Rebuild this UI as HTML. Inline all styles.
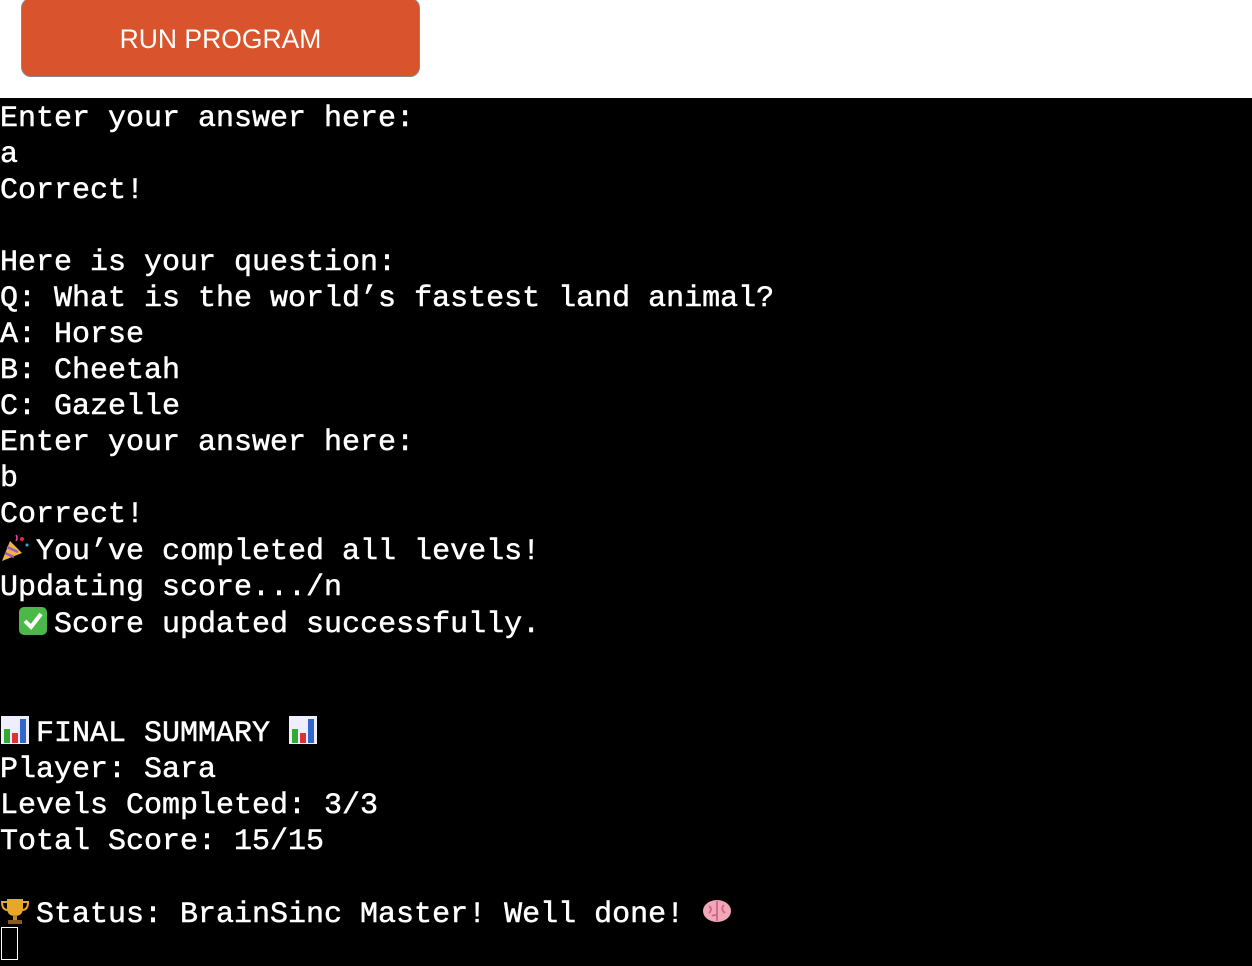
<!DOCTYPE html>
<html><head><meta charset="utf-8"><style>
html,body{margin:0;padding:0;background:#fff;width:1252px;height:966px;overflow:hidden}
.btn{position:absolute;left:21px;top:-2px;width:397px;height:77px;background:#d9542c;border:1px solid #888;border-radius:10px;color:#fff;font:26.5px "Liberation Sans",Arial,sans-serif;text-align:center;line-height:80px}
.term{position:absolute;left:0;top:98px;width:1252px;height:868px;background:#000}
pre{margin:0;padding-top:3px;color:#fff;font:30px/36px "Liberation Mono","Courier New",monospace;white-space:pre;-webkit-text-stroke:0.5px #fff}
.e{display:inline-block;width:36px;height:30px;vertical-align:-4px;line-height:0}
.e svg{width:30px;height:30px}
.cur{position:absolute;left:1px;top:829px;width:15px;height:31px;border:1px solid #fff}
</style></head><body>
<div class="btn">RUN PROGRAM</div>
<div class="term"><pre>Enter your answer here:
a
Correct!

Here is your question:
Q: What is the world’s fastest land animal?
A: Horse
B: Cheetah
C: Gazelle
Enter your answer here:
b
Correct!
<span class="e"><svg viewBox="0 0 30 30"><polygon points="2,28 10,8 22,20" fill="#f2b63c"/><path d="M5 20 L14 24 M7 14 L18 19" stroke="#9b5bc9" stroke-width="2.5"/><circle cx="22" cy="6" r="2" fill="#e24"/><circle cx="27" cy="12" r="1.5" fill="#3ae"/><path d="M16 2 q2 3 0 6" stroke="#e4a" fill="none" stroke-width="1.5"/></svg></span>You’ve completed all levels!
Updating score.../n
 <span class="e"><svg viewBox="0 0 30 30"><rect x="1" y="1" width="28" height="28" rx="5" fill="#4cb84a"/><path d="M7 15 L13 21 L23 8" stroke="#fff" stroke-width="4" fill="none"/></svg></span>Score updated successfully.


<span class="e"><svg viewBox="0 0 30 30"><rect x="1" y="1" width="28" height="28" fill="#eef"/><rect x="4" y="14" width="6" height="14" fill="#3a3"/><rect x="12" y="18" width="6" height="10" fill="#d33"/><rect x="20" y="4" width="6" height="24" fill="#36c"/></svg></span>FINAL SUMMARY <span class="e"><svg viewBox="0 0 30 30"><rect x="1" y="1" width="28" height="28" fill="#eef"/><rect x="4" y="14" width="6" height="14" fill="#3a3"/><rect x="12" y="18" width="6" height="10" fill="#d33"/><rect x="20" y="4" width="6" height="24" fill="#36c"/></svg></span>
Player: Sara
Levels Completed: 3/3
Total Score: 15/15

<span class="e"><svg viewBox="0 0 30 30"><path d="M7 3 H23 V12 Q23 20 15 20 Q7 20 7 12 Z" fill="#e8a72a"/><path d="M7 6 H2 Q2 14 8 14 M23 6 H28 Q28 14 22 14" stroke="#e8a72a" stroke-width="2" fill="none"/><rect x="13" y="19" width="4" height="5" fill="#c8861a"/><rect x="8" y="24" width="14" height="4" fill="#8a5a1a"/></svg></span>Status: BrainSinc Master! Well done! <span class="e"><svg viewBox="0 0 30 30"><ellipse cx="15" cy="15" rx="14" ry="11" fill="#f2a7b8"/><path d="M15 5 V25 M7 10 q4 3 0 7 M22 9 q-4 4 1 8 M10 20 q3 -2 5 0" stroke="#c86a85" stroke-width="1.8" fill="none"/></svg></span></pre><div class="cur"></div></div>
</body></html>
